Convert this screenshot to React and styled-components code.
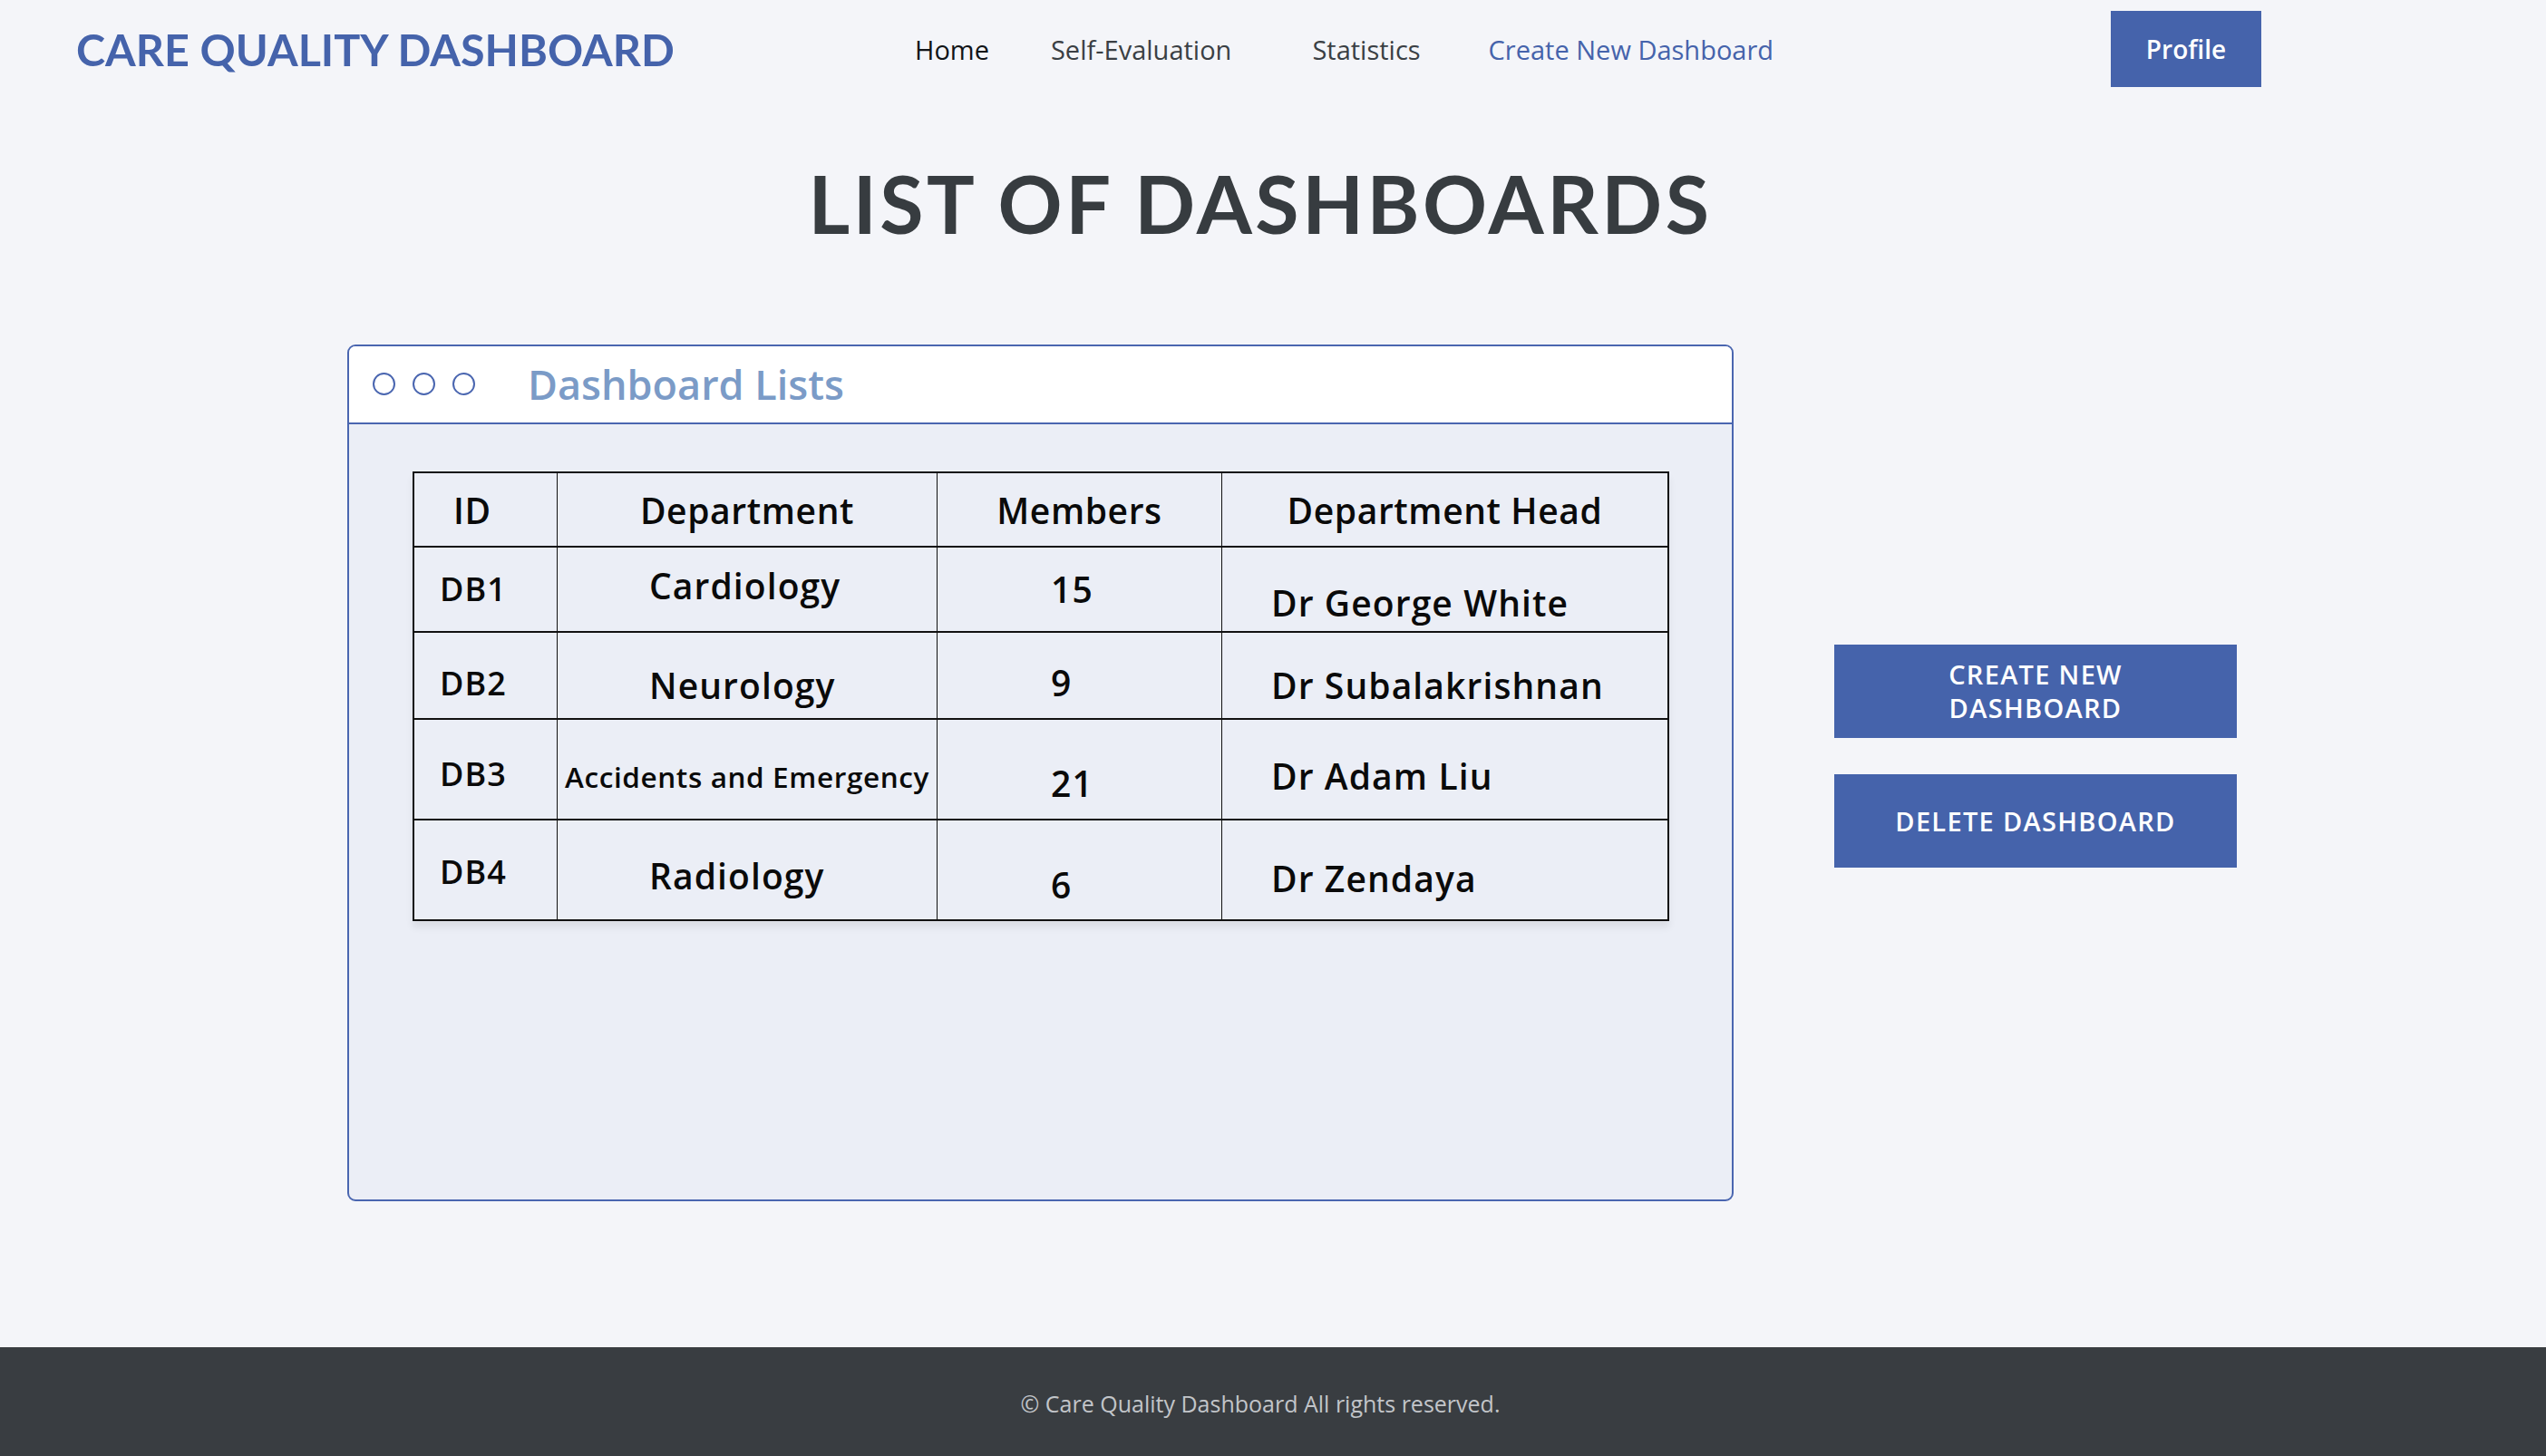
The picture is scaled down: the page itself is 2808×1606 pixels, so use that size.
import React from "react";
import styled, { createGlobalStyle } from "styled-components";

const GlobalStyle = createGlobalStyle`
  html, body {
    margin: 0;
    padding: 0;
    background: #f4f5f9;
    font-family: "Open Sans", "Liberation Sans", sans-serif;
  }
  * { box-sizing: border-box; }
`;

// padding-top / padding-left / font-size per cell, picked to sit the text
// where the original screenshot has it
const rows = [
  {
    h: 94,
    cells: [
      { text: "DB1", pt: 28, pl: 28, fs: 36 },
      { text: "Cardiology", pt: 22, pl: 101 },
      { text: "15", pt: 26, pl: 125 },
      { text: "Dr George White", pt: 41, pl: 54 },
    ],
  },
  {
    h: 96,
    cells: [
      { text: "DB2", pt: 38, pl: 28, fs: 36 },
      { text: "Neurology", pt: 38, pl: 101 },
      { text: "9", pt: 35, pl: 125 },
      { text: "Dr Subalakrishnan", pt: 38, pl: 54 },
    ],
  },
  {
    h: 111,
    cells: [
      { text: "DB3", pt: 42, pl: 28, fs: 36 },
      { text: "Accidents and Emergency", pt: 47, pl: 8, fs: 31.5, ls: 0.6 },
      { text: "21", pt: 50, pl: 125 },
      { text: "Dr Adam Liu", pt: 42, pl: 54 },
    ],
  },
  {
    h: 113,
    cells: [
      { text: "DB4", pt: 39, pl: 28, fs: 36 },
      { text: "Radiology", pt: 41, pl: 101 },
      { text: "6", pt: 51, pl: 125 },
      { text: "Dr Zendaya", pt: 44, pl: 54 },
    ],
  },
];

export default function App() {
  return (
    <>
      <GlobalStyle />
      <Page>
        <Header>
          <Logo>CARE QUALITY DASHBOARD</Logo>
          <Nav>
            <NavLink $color="#111417">Home</NavLink>
            <NavLink $color="#3a3f44" $ml={68}>Self-Evaluation</NavLink>
            <NavLink $color="#3a3f44" $ml={89}>Statistics</NavLink>
            <NavLink $color="#4563ab" $ml={75}>Create New Dashboard</NavLink>
          </Nav>
          <ProfileButton>Profile</ProfileButton>
        </Header>

        <Title>LIST OF DASHBOARDS</Title>

        <Main>
          <Card>
            <CardHeader>
              <Dots>
                <Dot />
                <Dot />
                <Dot />
              </Dots>
              <CardTitle>Dashboard Lists</CardTitle>
            </CardHeader>
            <CardBody>
              <Table>
                <Row $h={82}>
                  <HeadCell $pl={43}>ID</HeadCell>
                  <HeadCell $center>Department</HeadCell>
                  <HeadCell $center>Members</HeadCell>
                  <HeadCell $center>Department Head</HeadCell>
                </Row>
                {rows.map((r, i) => (
                  <Row key={i} $h={r.h} $last={i === rows.length - 1}>
                    {r.cells.map((c, j) => (
                      <Cell
                        key={j}
                        $pt={c.pt}
                        $pl={c.pl}
                        $fs={c.fs || 39}
                        $ls={c.ls ?? 1.1}
                      >
                        {c.text}
                      </Cell>
                    ))}
                  </Row>
                ))}
              </Table>
            </CardBody>
          </Card>

          <Actions>
            <ActionButton>
              CREATE NEW
              <br />
              DASHBOARD
            </ActionButton>
            <ActionButton>DELETE DASHBOARD</ActionButton>
          </Actions>
        </Main>

        <Footer>© Care Quality Dashboard All rights reserved.</Footer>
      </Page>
    </>
  );
}

const Page = styled.div`
  min-height: 100vh;
  display: flex;
  flex-direction: column;
`;

const Header = styled.header`
  display: flex;
  align-items: center;
  height: 108px;
  padding: 0 314px 0 84px;
`;

const Logo = styled.div`
  flex: 0 0 925px;
  font-family: "Lato", sans-serif;
  font-weight: 700;
  font-size: 48.5px;
  color: #4563ab;
`;

const Nav = styled.nav`
  display: flex;
  align-items: center;
  flex: 1;
`;

const NavLink = styled.a`
  font-size: 29px;
  color: ${({ $color }) => $color};
  margin-left: ${({ $ml }) => ($ml ? `${$ml}px` : "0")};
  cursor: pointer;
`;

const ProfileButton = styled.button`
  width: 166px;
  height: 84px;
  border: none;
  background: #4563ab;
  color: #fff;
  font-family: "Open Sans", sans-serif;
  font-weight: 600;
  font-size: 28px;
  cursor: pointer;
`;

const Title = styled.h1`
  margin: 64px 0 102px;
  padding-right: 28px;
  text-align: center;
  font-family: "Lato", sans-serif;
  font-weight: 700;
  font-size: 88px;
  letter-spacing: 3.5px;
  line-height: 1.2;
  color: #373c40;
`;

const Main = styled.main`
  display: flex;
  align-items: flex-start;
  padding-left: 383px;
  gap: 111px;
`;

const Card = styled.section`
  width: 1529px;
  height: 945px;
  border: 2px solid #4a66b0;
  border-radius: 9px;
  overflow: hidden;
  display: flex;
  flex-direction: column;
  background: #ebeef6;
`;

const CardHeader = styled.div`
  height: 86px;
  flex: 0 0 86px;
  display: flex;
  align-items: center;
  background: #fff;
  border-bottom: 2px solid #4a66b0;
  padding-left: 26px;
`;

const Dots = styled.div`
  display: flex;
  gap: 19px;
  margin-right: 58px;
`;

const Dot = styled.span`
  width: 25px;
  height: 25px;
  border: 2px solid #4a66b0;
  border-radius: 50%;
`;

const CardTitle = styled.h2`
  margin: 0;
  font-size: 45px;
  font-weight: 600;
  color: #7b9bc7;
`;

const CardBody = styled.div`
  flex: 1;
  padding: 52px 0 0 70px;
`;

const Table = styled.div`
  width: 1386px;
  border-left: 2px solid #111;
  border-right: 2px solid #111;
  box-shadow: 0 7px 8px rgba(0, 0, 0, 0.07);
`;

const Row = styled.div`
  display: grid;
  grid-template-columns: 157px 419px 314px 492px;
  height: ${({ $h }) => $h}px;
  border-top: 2px solid #111;
  border-bottom: ${({ $last }) => ($last ? "2px solid #111" : "none")};
  & > * + * {
    border-left: 1.5px solid #111;
  }
`;

const HeadCell = styled.div`
  padding-top: 21px;
  padding-left: ${({ $pl }) => ($pl ? `${$pl}px` : "0")};
  text-align: ${({ $center }) => ($center ? "center" : "left")};
  font-size: 39px;
  font-weight: 600;
  letter-spacing: 0.6px;
  line-height: 1;
  color: #0a0a0a;
`;

const Cell = styled.div`
  padding-top: ${({ $pt }) => $pt}px;
  padding-left: ${({ $pl }) => $pl}px;
  font-size: ${({ $fs }) => $fs}px;
  font-weight: 600;
  letter-spacing: ${({ $ls }) => $ls}px;
  line-height: 1;
  color: #0a0a0a;
  white-space: nowrap;
`;

const Actions = styled.div`
  display: flex;
  flex-direction: column;
  gap: 40px;
  margin-top: 331px;
`;

const ActionButton = styled.button`
  width: 444px;
  height: 103px;
  border: none;
  background: #4563ab;
  color: #fff;
  font-family: "Open Sans", sans-serif;
  font-weight: 600;
  font-size: 29px;
  line-height: 37px;
  letter-spacing: 1.3px;
  cursor: pointer;
`;

const Footer = styled.footer`
  margin-top: auto;
  height: 120px;
  padding: 4px 28px 0 0;
  background: #393d41;
  color: #c2c5c9;
  display: flex;
  align-items: center;
  justify-content: center;
  font-size: 25px;
`;
